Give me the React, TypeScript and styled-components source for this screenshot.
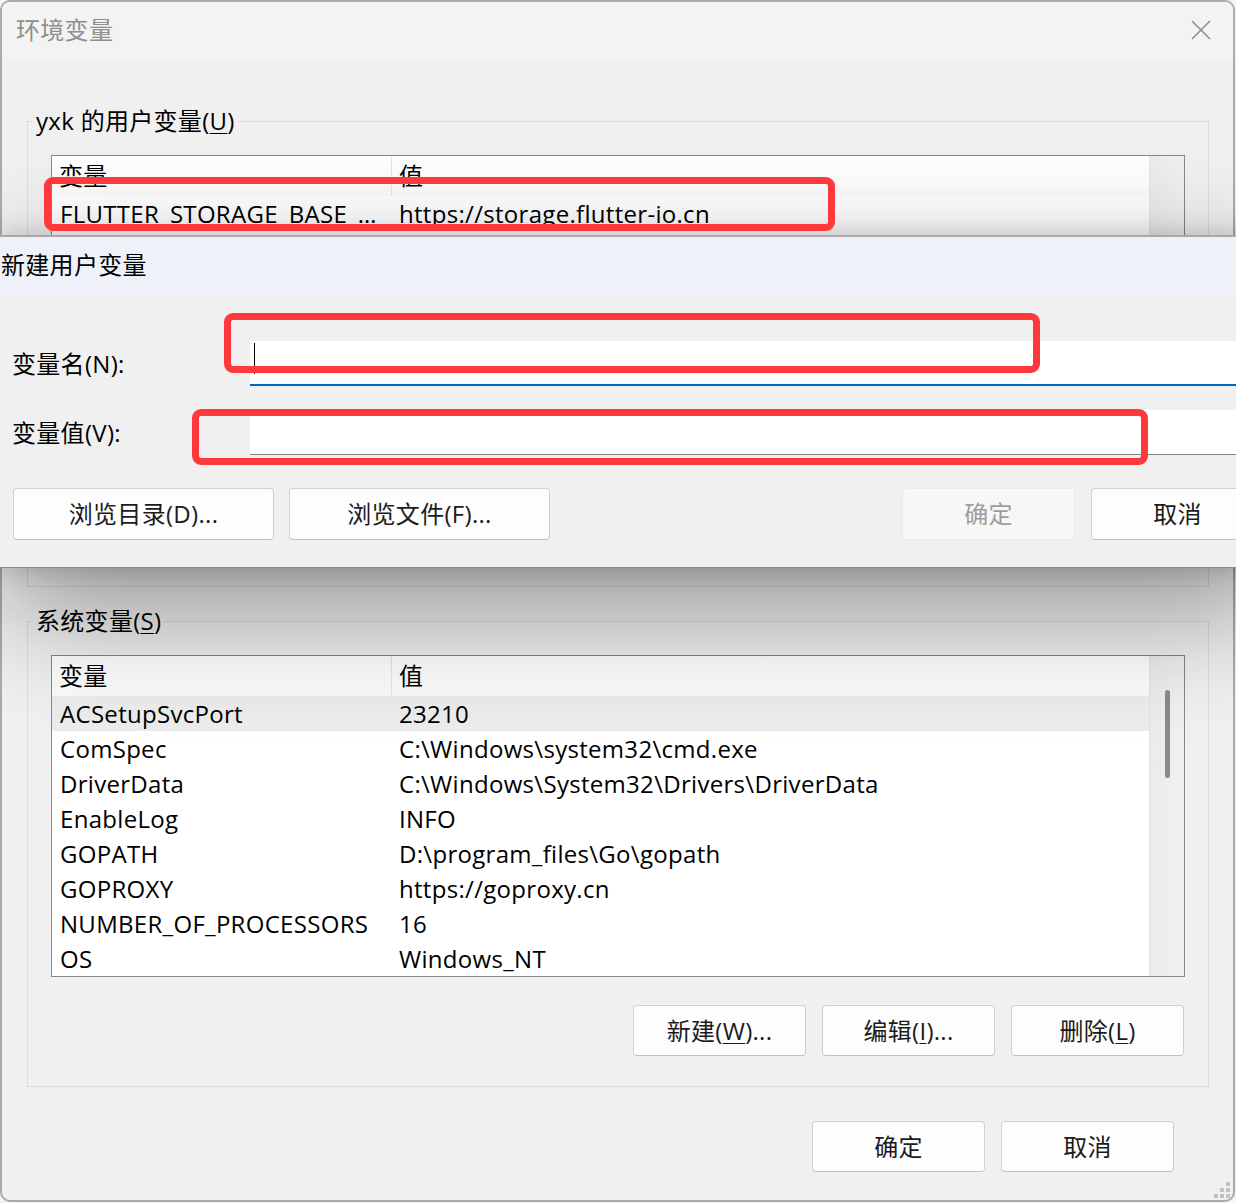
import React from "react";
import styled, { createGlobalStyle } from "styled-components";

const FONT = `"Open Sans", "Noto Sans CJK SC", sans-serif`;

const GlobalStyle = createGlobalStyle`
  html, body {
    margin: 0;
    padding: 0;
    width: 1236px;
    height: 1203px;
    overflow: hidden;
    background: #f4f4f4;
  }
  body {
    font-family: ${FONT};
    font-size: 24px;
    letter-spacing: 0.3px;
    color: #000;
  }
  * { box-sizing: border-box; }
`;

/* ---------- desktop & main window ---------- */

const Screen = styled.div`
  position: relative;
  width: 1236px;
  height: 1203px;
  overflow: hidden;
  background: #f4f4f4;
`;

const Window = styled.div`
  position: relative;
  width: 1235px;
  height: 1202px;
  border: 2px solid #ababab;
  border-radius: 10px;
  background: #f0f0f0;
  display: flex;
  flex-direction: column;
  overflow: hidden;
`;

const TitleBar = styled.div`
  height: 56px;
  flex: none;
  display: flex;
  align-items: center;
  justify-content: space-between;
  padding: 0 22px 0 14px;
  background: #f3f3f3;
  color: #8f8f8f;
  line-height: 30px;
`;

const CloseGlyph = styled.svg`
  width: 20px;
  height: 20px;
  display: block;
`;

const Body = styled.div`
  flex: 1;
  display: flex;
  flex-direction: column;
  padding: 0 24px 0 25px;
`;

const GroupBox = styled.fieldset<{ $top: number; $bottom: number }>`
  margin: ${(p) => p.$top}px 0 0;
  padding: 0 23px ${(p) => p.$bottom}px;
  border: 1px solid #dcdcdc;
  min-width: 0;
`;

const Legend = styled.legend`
  margin-left: -18px;
  padding: 0 3px;
  line-height: 30px;
  font-size: 24px;
`;

const Mnemonic = styled.span`
  text-decoration: underline;
  text-decoration-thickness: 1px;
  text-underline-offset: 3px;
`;

/* ---------- list view ---------- */

const ListView = styled.div`
  margin-top: 19px;
  height: 322px;
  border: 1px solid #828790;
  background: #fff;
  display: grid;
  grid-template-columns: 1fr 35px;
  overflow: hidden;
`;

const ListColumn = styled.div`
  display: flex;
  flex-direction: column;
  overflow: hidden;
`;

const HeaderRow = styled.div`
  flex: none;
  height: 40px;
  display: grid;
  grid-template-columns: 340px 1fr;
  background: linear-gradient(#ffffff, #fbfbfb);
`;

const HeaderCell = styled.div<{ $divider?: boolean }>`
  padding-left: 7px;
  line-height: 40px;
  border-right: ${(p) => (p.$divider ? "1px solid #e5e5e5" : "none")};
`;

const Row = styled.div<{ $selected?: boolean }>`
  flex: none;
  height: 35px;
  display: grid;
  grid-template-columns: 340px 1fr;
  line-height: 35px;
  background: ${(p) => (p.$selected ? "#ececec" : "transparent")};
`;

const Cell = styled.div<{ $first?: boolean }>`
  padding-left: ${(p) => (p.$first ? 8 : 7)}px;
  white-space: nowrap;
  overflow: hidden;
`;

const ScrollTrack = styled.div`
  background: linear-gradient(90deg, #ebebeb, #f0f0f0);
  border-left: 1px solid #e4e4e4;
  display: flex;
  justify-content: center;
  padding-top: 34px;
`;

const ScrollThumb = styled.div`
  width: 5px;
  height: 88px;
  border-radius: 3px;
  background: #8a8a8a;
`;

/* ---------- buttons ---------- */

const Button = styled.button<{ $w: number; $h: number; $disabled?: boolean }>`
  width: ${(p) => p.$w}px;
  height: ${(p) => p.$h}px;
  flex: none;
  padding: 0;
  border: 1px solid ${(p) => (p.$disabled ? "#ebebeb" : "#d0d0d0")};
  border-bottom-color: ${(p) => (p.$disabled ? "#ebebeb" : "#c2c2c2")};
  border-radius: 4px;
  background: ${(p) => (p.$disabled ? "#f7f7f7" : "#fdfdfd")};
  color: ${(p) => (p.$disabled ? "#9d9d9d" : "#1b1b1b")};
  font-family: ${FONT};
  font-size: 24px;
  letter-spacing: 0.3px;
  line-height: 30px;
`;

const ActionRow = styled.div`
  display: flex;
  justify-content: flex-end;
  gap: 16px;
  margin: 28px 1px 0 0;
`;

const FooterRow = styled.div`
  display: flex;
  justify-content: flex-end;
  gap: 16px;
  margin: 34px 35px 0 0;
`;

const Grip = styled.svg`
  position: absolute;
  right: 3px;
  bottom: 2px;
  width: 16px;
  height: 16px;
`;

/* ---------- "new user variable" dialog ---------- */

const Popup = styled.div`
  position: absolute;
  top: 235px;
  left: 0;
  width: 1277px;
  z-index: 3;
  border-top: 2px solid #a8a8a8;
  border-bottom: 1px solid #8e8e8e;
  background: #f0f0f0;
  box-shadow: 0 40px 110px rgba(0, 0, 0, 0.4), 0 0 24px rgba(0, 0, 0, 0.16);
`;

const PopupTitle = styled.div`
  height: 56px;
  display: flex;
  align-items: center;
  padding-left: 1px;
  background: #eff1f8;
  line-height: 30px;
`;

const PopupBody = styled.div`
  padding: 48px 13px 27px 12px;
`;

const FieldGrid = styled.div`
  display: grid;
  grid-template-columns: 238px 1fr;
  row-gap: 24px;
  align-items: center;
`;

const FieldLabel = styled.div`
  line-height: 30px;
`;

const Field = styled.div<{ $focused?: boolean }>`
  height: 45px;
  background: #fff;
  border-bottom: ${(p) => (p.$focused ? "2px solid #0067c0" : "1px solid #858585")};
  display: flex;
  align-items: flex-start;
  padding: 2px 0 0 4px;
`;

const Caret = styled.div`
  width: 1px;
  height: 31px;
  background: #000;
`;

const PopupButtons = styled.div`
  display: flex;
  gap: 15px;
  margin-top: 33px;
  padding-left: 1px;
`;

const RightButtons = styled.div`
  margin-left: auto;
  display: flex;
  gap: 16px;
`;

/* ---------- red highlight frames ---------- */

const Highlight = styled.div<{ $x: number; $y: number; $w: number; $h: number }>`
  position: absolute;
  left: ${(p) => p.$x}px;
  top: ${(p) => p.$y}px;
  width: ${(p) => p.$w}px;
  height: ${(p) => p.$h}px;
  border: 7px solid #fd393c;
  border-radius: 9px;
  z-index: 10;
  pointer-events: none;
`;

type Variable = { name: string; value: string };

const userVars: Variable[] = [
  { name: "FLUTTER_STORAGE_BASE_…", value: "https://storage.flutter-io.cn" },
];

const systemVars: Variable[] = [
  { name: "ACSetupSvcPort", value: "23210" },
  { name: "ComSpec", value: "C:\\Windows\\system32\\cmd.exe" },
  { name: "DriverData", value: "C:\\Windows\\System32\\Drivers\\DriverData" },
  { name: "EnableLog", value: "INFO" },
  { name: "GOPATH", value: "D:\\program_files\\Go\\gopath" },
  { name: "GOPROXY", value: "https://goproxy.cn" },
  { name: "NUMBER_OF_PROCESSORS", value: "16" },
  { name: "OS", value: "Windows_NT" },
];

function VariableList({
  rows,
  selected,
  thumb,
}: {
  rows: Variable[];
  selected?: number;
  thumb?: boolean;
}) {
  return (
    <ListView>
      <ListColumn>
        <HeaderRow>
          <HeaderCell $divider>变量</HeaderCell>
          <HeaderCell>值</HeaderCell>
        </HeaderRow>
        {rows.map((r, i) => (
          <Row key={r.name} $selected={i === selected}>
            <Cell $first>{r.name}</Cell>
            <Cell>{r.value}</Cell>
          </Row>
        ))}
      </ListColumn>
      <ScrollTrack>{thumb && <ScrollThumb />}</ScrollTrack>
    </ListView>
  );
}

export default function App() {
  return (
    <Screen>
      <GlobalStyle />
      <Window>
        <TitleBar>
          <span>环境变量</span>
          <CloseGlyph viewBox="0 0 20 20">
            <path d="M1 1 L19 19 M19 1 L1 19" stroke="#8e8e8e" strokeWidth="1.6" fill="none" />
          </CloseGlyph>
        </TitleBar>
        <Body>
          <GroupBox $top={48} $bottom={109}>
            <Legend>
              yxk 的用户变量(<Mnemonic>U</Mnemonic>)
            </Legend>
            <VariableList rows={userVars} />
          </GroupBox>
          <GroupBox $top={19} $bottom={30}>
            <Legend>
              系统变量(<Mnemonic>S</Mnemonic>)
            </Legend>
            <VariableList rows={systemVars} selected={0} thumb />
            <ActionRow>
              <Button $w={173} $h={51}>新建(<Mnemonic>W</Mnemonic>)...</Button>
              <Button $w={173} $h={51}>编辑(<Mnemonic>I</Mnemonic>)...</Button>
              <Button $w={173} $h={51}>删除(<Mnemonic>L</Mnemonic>)</Button>
            </ActionRow>
          </GroupBox>
          <FooterRow>
            <Button $w={173} $h={51}>确定</Button>
            <Button $w={173} $h={51}>取消</Button>
          </FooterRow>
        </Body>
        <Grip viewBox="0 0 16 16">
          <g fill="#c2c2c2">
            <rect x="12" y="0" width="4" height="4" />
            <rect x="6" y="6" width="4" height="4" />
            <rect x="12" y="6" width="4" height="4" />
            <rect x="0" y="12" width="4" height="4" />
            <rect x="6" y="12" width="4" height="4" />
            <rect x="12" y="12" width="4" height="4" />
          </g>
        </Grip>
      </Window>

      <Popup>
        <PopupTitle>新建用户变量</PopupTitle>
        <PopupBody>
          <FieldGrid>
            <FieldLabel>变量名(N):</FieldLabel>
            <Field $focused>
              <Caret />
            </Field>
            <FieldLabel>变量值(V):</FieldLabel>
            <Field />
          </FieldGrid>
          <PopupButtons>
            <Button $w={261} $h={52}>浏览目录(D)...</Button>
            <Button $w={261} $h={52}>浏览文件(F)...</Button>
            <RightButtons>
              <Button $w={173} $h={52} $disabled>确定</Button>
              <Button $w={173} $h={52}>取消</Button>
            </RightButtons>
          </PopupButtons>
        </PopupBody>
      </Popup>

      <Highlight $x={44} $y={177} $w={791} $h={54} />
      <Highlight $x={224} $y={313} $w={816} $h={60} />
      <Highlight $x={192} $y={409} $w={956} $h={56} />
    </Screen>
  );
}
